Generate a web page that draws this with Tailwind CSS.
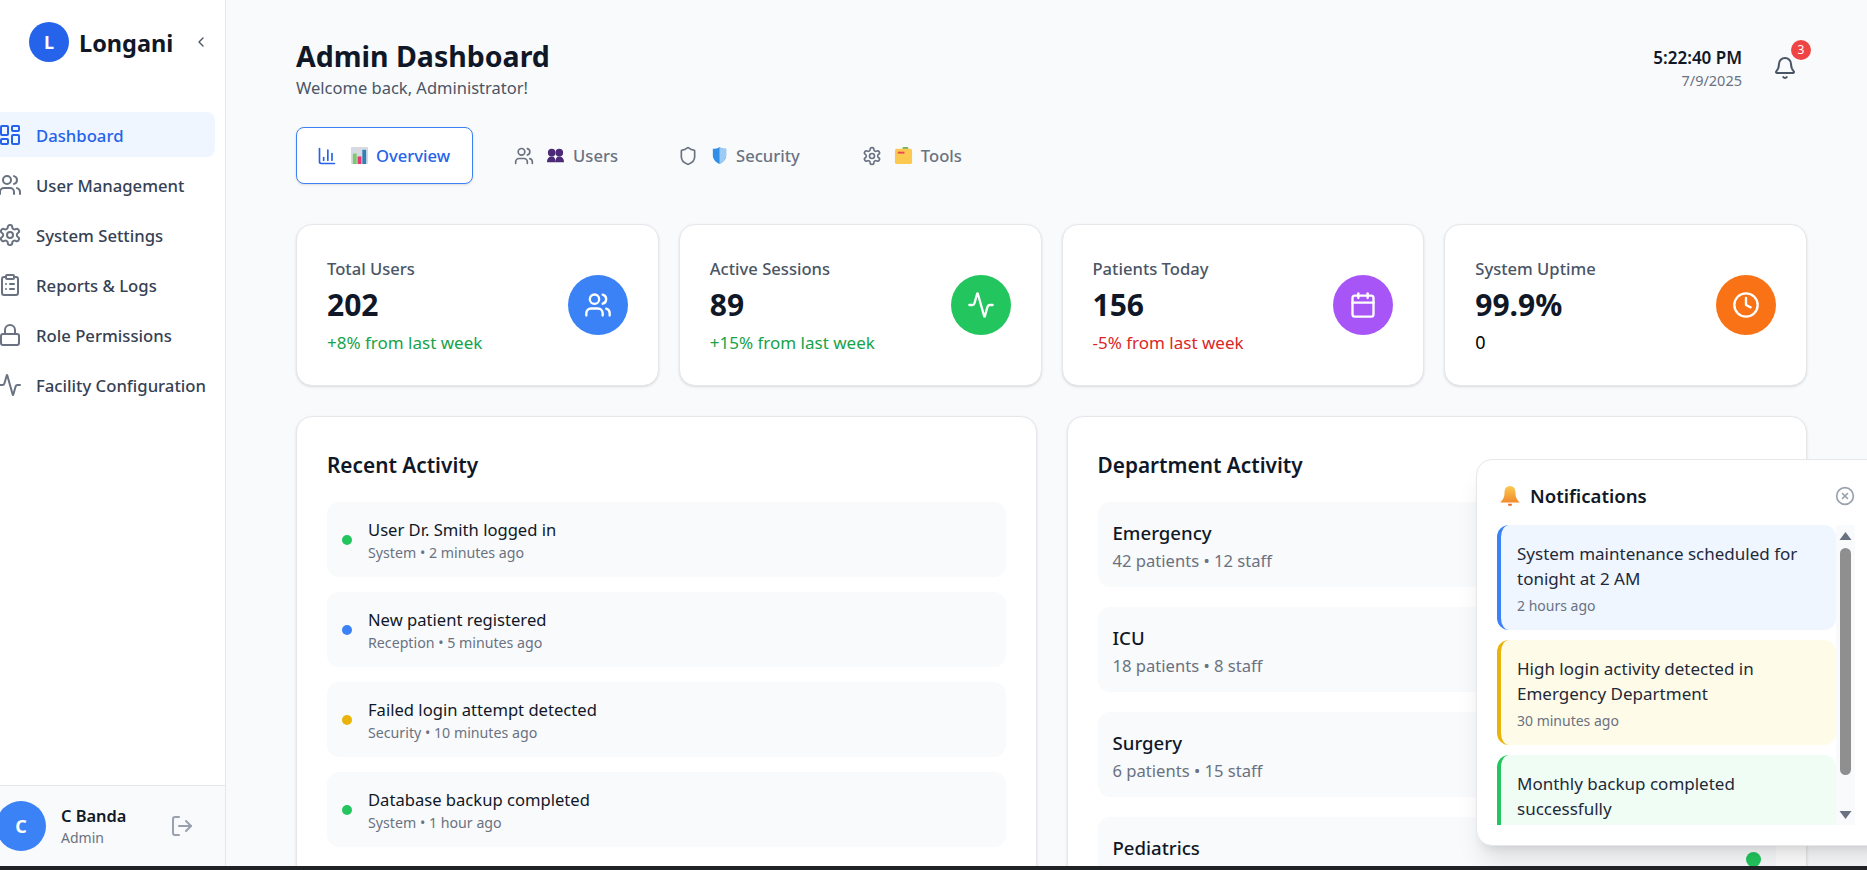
<!DOCTYPE html>
<html lang="en">
<head>
  <meta charset="UTF-8" />
  <meta name="viewport" content="width=device-width, initial-scale=1.0"/>
  <title>Longani - Admin Dashboard</title>
  <script src="https://cdn.jsdelivr.net/npm/@tailwindcss/browser@4"></script>
</head>
<body class="h-[870px] overflow-hidden bg-[#1f2326] font-['Noto_Sans',sans-serif] text-gray-900">
  <!-- icon sprite -->
  <svg class="hidden" xmlns="http://www.w3.org/2000/svg">
    <symbol id="i-dashboard" viewBox="0 0 24 24"><rect x="3" y="3" width="7" height="9" rx="1"/><rect x="14" y="3" width="7" height="5" rx="1"/><rect x="14" y="12" width="7" height="9" rx="1"/><rect x="3" y="16" width="7" height="5" rx="1"/></symbol>
    <symbol id="i-users" viewBox="0 0 24 24"><path d="M16 21v-2a4 4 0 0 0-4-4H6a4 4 0 0 0-4 4v2"/><circle cx="9" cy="7" r="4"/><path d="M22 21v-2a4 4 0 0 0-3-3.87"/><path d="M16 3.13a4 4 0 0 1 0 7.75"/></symbol>
    <symbol id="i-settings" viewBox="0 0 24 24"><path d="M12.22 2h-.44a2 2 0 0 0-2 2v.18a2 2 0 0 1-1 1.73l-.43.25a2 2 0 0 1-2 0l-.15-.08a2 2 0 0 0-2.73.73l-.22.38a2 2 0 0 0 .73 2.73l.15.1a2 2 0 0 1 1 1.72v.51a2 2 0 0 1-1 1.74l-.15.09a2 2 0 0 0-.73 2.73l.22.38a2 2 0 0 0 2.73.73l.15-.08a2 2 0 0 1 2 0l.43.25a2 2 0 0 1 1 1.73V20a2 2 0 0 0 2 2h.44a2 2 0 0 0 2-2v-.18a2 2 0 0 1 1-1.73l.43-.25a2 2 0 0 1 2 0l.15.08a2 2 0 0 0 2.73-.73l.22-.39a2 2 0 0 0-.73-2.73l-.15-.08a2 2 0 0 1-1-1.74v-.5a2 2 0 0 1 1-1.74l.15-.09a2 2 0 0 0 .73-2.73l-.22-.38a2 2 0 0 0-2.73-.73l-.15.08a2 2 0 0 1-2 0l-.43-.25a2 2 0 0 1-1-1.73V4a2 2 0 0 0-2-2z"/><circle cx="12" cy="12" r="3"/></symbol>
    <symbol id="i-clipboard" viewBox="0 0 24 24"><rect x="8" y="2" width="8" height="4" rx="1"/><path d="M16 4h2a2 2 0 0 1 2 2v14a2 2 0 0 1-2 2H6a2 2 0 0 1-2-2V6a2 2 0 0 1 2-2h2"/><path d="M12 11h4"/><path d="M12 16h4"/><path d="M8 11h.01"/><path d="M8 16h.01"/></symbol>
    <symbol id="i-lock" viewBox="0 0 24 24"><rect x="3" y="11" width="18" height="11" rx="2"/><path d="M7 11V7a5 5 0 0 1 10 0v4"/></symbol>
    <symbol id="i-activity" viewBox="0 0 24 24"><path d="M22 12h-2.48a2 2 0 0 0-1.93 1.46l-2.35 8.36a.25.25 0 0 1-.48 0L9.24 2.18a.25.25 0 0 0-.48 0l-2.35 8.36A2 2 0 0 1 4.49 12H2"/></symbol>
    <symbol id="i-chart" viewBox="0 0 24 24"><path d="M3 3v16a2 2 0 0 0 2 2h16"/><path d="M18 17V9"/><path d="M13 17V5"/><path d="M8 17v-3"/></symbol>
    <symbol id="i-shield" viewBox="0 0 24 24"><path d="M20 13c0 5-3.5 7.5-7.66 8.95a1 1 0 0 1-.67-.01C7.5 20.5 4 18 4 13V6a1 1 0 0 1 1-1c2 0 4.5-1.2 6.24-2.72a1.17 1.17 0 0 1 1.52 0C14.51 3.81 17 5 19 5a1 1 0 0 1 1 1z"/></symbol>
    <symbol id="i-calendar" viewBox="0 0 24 24"><path d="M8 2v4"/><path d="M16 2v4"/><rect x="3" y="4" width="18" height="18" rx="2"/><path d="M3 10h18"/></symbol>
    <symbol id="i-clock" viewBox="0 0 24 24"><circle cx="12" cy="12" r="10"/><path d="M12 6v6l4 2"/></symbol>
  </svg>

  <div class="flex h-[866px]">
    <!-- sidebar -->
    <aside class="flex h-full w-[226px] shrink-0 flex-col overflow-hidden border-r border-gray-200 bg-white">
      <div class="flex h-[84px] items-start pl-[29px] pt-[22px]">
        <div class="flex size-10 items-center justify-center rounded-full bg-[#2563eb] text-lg font-bold text-white">L</div>
        <span class="ml-[10px] mt-[4px] text-[23.5px] font-bold">Longani</span>
        <svg class="ml-[20px] mt-[12px] size-4 text-gray-600" viewBox="0 0 24 24" fill="none" stroke="currentColor" stroke-width="2" stroke-linecap="round" stroke-linejoin="round"><path d="m15 18-6-6 6-6"/></svg>
      </div>
      <nav class="ml-[-20px] mt-[28px] flex w-[235px] flex-1 flex-col gap-[5px] text-[16.7px] font-medium text-gray-700">
        <a class="flex h-[45px] items-center gap-[14px] rounded-lg bg-[#eff6ff] pl-[18px] text-[#2563eb]"><svg class="size-6 shrink-0" fill="none" stroke="currentColor" stroke-width="2" stroke-linecap="round" stroke-linejoin="round"><use href="#i-dashboard"/></svg><span class="mt-[2px]">Dashboard</span></a>
        <a class="flex h-[45px] items-center gap-[14px] rounded-lg pl-[18px]"><svg class="size-6 shrink-0 text-gray-500" fill="none" stroke="currentColor" stroke-width="2" stroke-linecap="round" stroke-linejoin="round"><use href="#i-users"/></svg><span class="mt-[2px]">User Management</span></a>
        <a class="flex h-[45px] items-center gap-[14px] rounded-lg pl-[18px]"><svg class="size-6 shrink-0 text-gray-500" fill="none" stroke="currentColor" stroke-width="2" stroke-linecap="round" stroke-linejoin="round"><use href="#i-settings"/></svg><span class="mt-[2px]">System Settings</span></a>
        <a class="flex h-[45px] items-center gap-[14px] rounded-lg pl-[18px]"><svg class="size-6 shrink-0 text-gray-500" fill="none" stroke="currentColor" stroke-width="2" stroke-linecap="round" stroke-linejoin="round"><use href="#i-clipboard"/></svg><span class="mt-[2px]">Reports &amp; Logs</span></a>
        <a class="flex h-[45px] items-center gap-[14px] rounded-lg pl-[18px]"><svg class="size-6 shrink-0 text-gray-500" fill="none" stroke="currentColor" stroke-width="2" stroke-linecap="round" stroke-linejoin="round"><use href="#i-lock"/></svg><span class="mt-[2px]">Role Permissions</span></a>
        <a class="flex h-[45px] items-center gap-[14px] rounded-lg pl-[18px]"><svg class="size-6 shrink-0 text-gray-500" fill="none" stroke="currentColor" stroke-width="2" stroke-linecap="round" stroke-linejoin="round"><use href="#i-activity"/></svg><span class="mt-[2px]">Facility Configuration</span></a>
      </nav>
      <div class="flex h-[81px] shrink-0 items-center border-t border-gray-200 bg-gray-50">
        <div class="ml-[-4px] flex size-[50px] shrink-0 items-center justify-center rounded-full bg-[#3b82f6] text-lg font-bold text-white">C</div>
        <div class="ml-[15px] w-[109px]">
          <p class="text-[16.4px] leading-6 font-semibold">C Banda</p>
          <p class="text-sm leading-5 text-gray-500">Admin</p>
        </div>
        <svg class="size-6 shrink-0 text-gray-400" viewBox="0 0 24 24" fill="none" stroke="currentColor" stroke-width="2" stroke-linecap="round" stroke-linejoin="round"><path d="M9 21H5a2 2 0 0 1-2-2V5a2 2 0 0 1 2-2h4"/><path d="m16 17 5-5-5-5"/><path d="M21 12H9"/></svg>
      </div>
    </aside>

    <!-- main -->
    <main class="relative flex-1 overflow-hidden bg-gray-50 pl-[70px] pr-[60px]">
      <header class="flex h-[127px] items-start justify-between pt-[38px]">
        <div>
          <h1 class="text-[28.5px] leading-[36px] font-bold">Admin Dashboard</h1>
          <p class="mt-[2px] text-[16.5px] leading-6 text-gray-600">Welcome back, Administrator!</p>
        </div>
        <div class="flex items-start">
          <div class="pt-[8px] text-right">
            <p class="text-[17px] leading-6 font-semibold">5:22:40 PM</p>
            <p class="text-[14.5px] leading-5 text-gray-500">7/9/2025</p>
          </div>
          <div class="relative ml-[31px] mr-[10px] mt-[18px] size-6 text-gray-600">
            <svg class="size-6" viewBox="0 0 24 24" fill="none" stroke="currentColor" stroke-width="2" stroke-linecap="round" stroke-linejoin="round"><path d="M10.268 21a2 2 0 0 0 3.464 0"/><path d="M3.262 15.326A1 1 0 0 0 4 17h16a1 1 0 0 0 .74-1.673C19.41 13.956 18 12.499 18 8A6 6 0 0 0 6 8c0 4.499-1.411 5.956-2.738 7.326"/></svg>
            <span class="absolute right-[-14px] top-[-16px] flex size-5 items-center justify-center rounded-full bg-[#ef4444] text-xs text-white">3</span>
          </div>
        </div>
      </header>

      <!-- tabs -->
      <div class="flex gap-5 text-[16.6px] font-medium text-gray-500">
        <button class="flex h-[57px] items-center rounded-lg border border-[#3b82f6] bg-white pl-[20px] pr-[22px] text-[#2563eb] shadow-sm">
          <svg class="mr-[13px] size-5" fill="none" stroke="currentColor" stroke-width="2" stroke-linecap="round" stroke-linejoin="round"><use href="#i-chart"/></svg>
          <svg class="mr-[7px] size-[19px]" viewBox="0 0 20 20"><rect x="1" y="1" width="18" height="18" rx="1" fill="#d6dbe3"/><rect x="3" y="8" width="4" height="11" fill="#7cc96b"/><rect x="8" y="11" width="4" height="8" fill="#e9386f"/><rect x="13" y="4" width="4" height="15" fill="#2f7fb8"/></svg>
          <span class="mt-[2px]">Overview</span>
        </button>
        <button class="flex h-[57px] items-center rounded-lg border border-transparent pl-[20px] pr-[18px]">
          <svg class="mr-[12px] size-5" fill="none" stroke="currentColor" stroke-width="2" stroke-linecap="round" stroke-linejoin="round"><use href="#i-users"/></svg>
          <svg class="mr-[8px] size-[19px]" viewBox="0 0 20 20" fill="#4c2a78"><circle cx="6" cy="7" r="4"/><circle cx="14" cy="7" r="4"/><path d="M1 17c0-4 2-6 5-6s4 2 4 6zM10 17c0-4 1-6 4-6s5 2 5 6z"/></svg>
          <span class="mt-[2px]">Users</span>
        </button>
        <button class="flex h-[57px] items-center rounded-lg border border-transparent px-[20px]">
          <svg class="mr-[12px] size-5" fill="none" stroke="currentColor" stroke-width="2" stroke-linecap="round" stroke-linejoin="round"><use href="#i-shield"/></svg>
          <svg class="mr-[7px] size-[19px]" viewBox="0 0 20 20"><path d="M10 1c2 1.500 4 2 7 2v7c0 4-3 7-7 9-4-2-7-5-7-9V3c3 0 5-.5 7-2z" fill="#2f8fe6"/><path d="M10 1c2 1.500 4 2 7 2v7c0 4-3 7-7 9z" fill="#9ccbf5"/></svg>
          <span class="mt-[2px]">Security</span>
        </button>
        <button class="flex h-[57px] items-center rounded-lg border border-transparent px-[20px]">
          <svg class="mr-[12px] size-5" fill="none" stroke="currentColor" stroke-width="2" stroke-linecap="round" stroke-linejoin="round"><use href="#i-settings"/></svg>
          <svg class="mr-[8px] size-[19px]" viewBox="0 0 20 20"><rect x="9" y="1" width="6" height="4" rx="1" fill="#6fb35a"/><rect x="1" y="3" width="18" height="16" rx="2" fill="#fbc94f"/><rect x="4" y="6" width="7" height="2" fill="#e8484f"/></svg>
          <span class="mt-[2px]">Tools</span>
        </button>
      </div>

      <!-- stat cards -->
      <section class="mt-[40px] grid grid-cols-4 gap-5">
        <div class="flex h-[162px] items-center justify-between rounded-2xl border border-gray-200 bg-white px-[30px] shadow-sm">
          <div class="pt-[2px]">
            <p class="mb-[1px] text-[16.6px] leading-6 font-medium text-gray-600">Total Users</p>
            <p class="mt-[6px] text-3xl leading-[36px] font-bold">202</p>
            <p class="mt-[8px] text-[17px] leading-6 text-[#16a34a]">+8% from last week</p>
          </div>
          <div class="flex size-[60px] items-center justify-center rounded-full bg-[#3b82f6] text-white"><svg class="size-7" fill="none" stroke="currentColor" stroke-width="2" stroke-linecap="round" stroke-linejoin="round"><use href="#i-users"/></svg></div>
        </div>
        <div class="flex h-[162px] items-center justify-between rounded-2xl border border-gray-200 bg-white px-[30px] shadow-sm">
          <div class="pt-[2px]">
            <p class="mb-[1px] text-[16.6px] leading-6 font-medium text-gray-600">Active Sessions</p>
            <p class="mt-[6px] text-3xl leading-[36px] font-bold">89</p>
            <p class="mt-[8px] text-[17px] leading-6 text-[#16a34a]">+15% from last week</p>
          </div>
          <div class="flex size-[60px] items-center justify-center rounded-full bg-[#22c55e] text-white"><svg class="size-7" fill="none" stroke="currentColor" stroke-width="2" stroke-linecap="round" stroke-linejoin="round"><use href="#i-activity"/></svg></div>
        </div>
        <div class="flex h-[162px] items-center justify-between rounded-2xl border border-gray-200 bg-white px-[30px] shadow-sm">
          <div class="pt-[2px]">
            <p class="mb-[1px] text-[16.6px] leading-6 font-medium text-gray-600">Patients Today</p>
            <p class="mt-[6px] text-3xl leading-[36px] font-bold">156</p>
            <p class="mt-[8px] text-[17px] leading-6 text-[#dc2626]">-5% from last week</p>
          </div>
          <div class="flex size-[60px] items-center justify-center rounded-full bg-[#a855f7] text-white"><svg class="size-7" fill="none" stroke="currentColor" stroke-width="2" stroke-linecap="round" stroke-linejoin="round"><use href="#i-calendar"/></svg></div>
        </div>
        <div class="flex h-[162px] items-center justify-between rounded-2xl border border-gray-200 bg-white px-[30px] shadow-sm">
          <div class="pt-[2px]">
            <p class="mb-[1px] text-[16.6px] leading-6 font-medium text-gray-600">System Uptime</p>
            <p class="mt-[6px] text-3xl leading-[36px] font-bold">99.9%</p>
            <p class="mb-[2px] mt-[8px] text-lg leading-[22px] text-black">0</p>
          </div>
          <div class="flex size-[60px] items-center justify-center rounded-full bg-[#f97316] text-white"><svg class="size-7" fill="none" stroke="currentColor" stroke-width="2" stroke-linecap="round" stroke-linejoin="round"><use href="#i-clock"/></svg></div>
        </div>
      </section>

      <!-- panels -->
      <section class="mt-[30px] grid grid-cols-2 gap-[30px]">
        <div class="h-[600px] rounded-2xl border border-gray-200 bg-white px-[30px] pt-[33px] shadow-sm">
          <h2 class="text-[20.8px] leading-[30px] font-semibold">Recent Activity</h2>
          <ul class="mt-[22px] flex flex-col gap-[15px]">
            <li class="flex h-[75px] items-center gap-[16px] rounded-xl bg-gray-50 px-[15px]"><span class="size-[10px] rounded-full bg-[#22c55e]"></span><div class="pt-[2px]"><p class="text-[16.6px] leading-6">User Dr. Smith logged in</p><p class="mt-[1px] text-[14.2px] leading-5 text-gray-500">System • 2 minutes ago</p></div></li>
            <li class="flex h-[75px] items-center gap-[16px] rounded-xl bg-gray-50 px-[15px]"><span class="size-[10px] rounded-full bg-[#3b82f6]"></span><div class="pt-[2px]"><p class="text-[16.6px] leading-6">New patient registered</p><p class="mt-[1px] text-[14.2px] leading-5 text-gray-500">Reception • 5 minutes ago</p></div></li>
            <li class="flex h-[75px] items-center gap-[16px] rounded-xl bg-gray-50 px-[15px]"><span class="size-[10px] rounded-full bg-[#eab308]"></span><div class="pt-[2px]"><p class="text-[16.6px] leading-6">Failed login attempt detected</p><p class="mt-[1px] text-[14.2px] leading-5 text-gray-500">Security • 10 minutes ago</p></div></li>
            <li class="flex h-[75px] items-center gap-[16px] rounded-xl bg-gray-50 px-[15px]"><span class="size-[10px] rounded-full bg-[#22c55e]"></span><div class="pt-[2px]"><p class="text-[16.6px] leading-6">Database backup completed</p><p class="mt-[1px] text-[14.2px] leading-5 text-gray-500">System • 1 hour ago</p></div></li>
          </ul>
        </div>
        <div class="h-[600px] rounded-2xl border border-gray-200 bg-white px-[30px] pt-[33px] shadow-sm">
          <h2 class="text-[20.8px] leading-[30px] font-semibold">Department Activity</h2>
          <ul class="mt-[22px] flex flex-col gap-5">
            <li class="flex h-[85px] items-center justify-between rounded-xl bg-gray-50 px-[15px]"><div class="pt-[3px]"><p class="text-[18.6px] leading-7 font-medium">Emergency</p><p class="mt-[2px] text-[16.6px] leading-6 text-gray-500">42 patients • 12 staff</p></div><span class="size-[15px] rounded-full bg-[#22c55e]"></span></li>
            <li class="flex h-[85px] items-center justify-between rounded-xl bg-gray-50 px-[15px]"><div class="pt-[3px]"><p class="text-[18.6px] leading-7 font-medium">ICU</p><p class="mt-[2px] text-[16.6px] leading-6 text-gray-500">18 patients • 8 staff</p></div><span class="size-[15px] rounded-full bg-[#22c55e]"></span></li>
            <li class="flex h-[85px] items-center justify-between rounded-xl bg-gray-50 px-[15px]"><div class="pt-[3px]"><p class="text-[18.6px] leading-7 font-medium">Surgery</p><p class="mt-[2px] text-[16.6px] leading-6 text-gray-500">6 patients • 15 staff</p></div><span class="size-[15px] rounded-full bg-[#22c55e]"></span></li>
            <li class="flex h-[85px] items-center justify-between rounded-xl bg-gray-50 px-[15px]"><div class="pt-[3px]"><p class="text-[18.6px] leading-7 font-medium">Pediatrics</p><p class="mt-[2px] text-[16.6px] leading-6 text-gray-500">24 patients • 9 staff</p></div><span class="size-[15px] rounded-full bg-[#22c55e]"></span></li>
          </ul>
        </div>
      </section>

      <!-- notifications popup -->
      <div class="absolute left-[1250px] top-[459px] h-[387px] w-[420px] rounded-2xl border border-gray-200 bg-white pl-[20px] pt-[20px] shadow-xl">
        <div class="flex h-[32px] w-[358px] items-center">
          <svg class="ml-[2px] size-[22px]" viewBox="0 0 20 20"><defs><linearGradient id="bellfill" x1="0" y1="0" x2="0" y2="1"><stop offset="0" stop-color="#fcc84e"/><stop offset="1" stop-color="#f28a2e"/></linearGradient></defs><path d="M10 1c3 0 5 2.500 5 6 0 4 1 6 4 9H1c3-3 4-5 4-9 0-3.500 2-6 5-6z" fill="url(#bellfill)"/><path d="M8 17h4a2 2 0 0 1-4 0z" fill="#e8742a"/></svg>
          <h3 class="ml-[9px] flex-1 text-[18.6px] font-semibold">Notifications</h3>
          <svg class="size-[20px] text-gray-400" viewBox="0 0 24 24" fill="none" stroke="currentColor" stroke-width="2" stroke-linecap="round" stroke-linejoin="round"><circle cx="12" cy="12" r="10"/><path d="m15 9-6 6"/><path d="m9 9 6 6"/></svg>
        </div>
        <div class="mt-[13px] flex h-[300px] w-[358px]">
          <div class="flex w-[339px] shrink-0 flex-col gap-[10px] overflow-hidden">
            <div class="h-[105px] shrink-0 rounded-xl border-l-[4px] border-[#3b82f6] bg-[#eff6ff] pl-[16px] pr-[16px] pt-[16px]"><p class="text-[17px] leading-[25px] text-gray-800">System maintenance scheduled for tonight at 2 AM</p><p class="mt-[5px] text-sm leading-5 text-gray-500">2 hours ago</p></div>
            <div class="h-[105px] shrink-0 rounded-xl border-l-[4px] border-[#eab308] bg-[#fefce8] pl-[16px] pr-[16px] pt-[16px]"><p class="text-[17px] leading-[25px] text-gray-800">High login activity detected in Emergency Department</p><p class="mt-[5px] text-sm leading-5 text-gray-500">30 minutes ago</p></div>
            <div class="h-[105px] shrink-0 rounded-xl border-l-[4px] border-[#22c55e] bg-[#f0fdf4] pl-[16px] pr-[16px] pt-[16px]"><p class="text-[17px] leading-[25px] text-gray-800">Monthly backup completed successfully</p></div>
          </div>
          <!-- scrollbar -->
          <div class="flex w-[19px] flex-col items-center bg-gray-50">
            <svg class="mt-[6px] h-[10px] w-[13px] text-gray-500" viewBox="0 0 13 10" fill="currentColor"><path d="M6.500 1 12.500 9H.5z"/></svg>
            <div class="mt-[7px] h-[227px] w-[11px] rounded-full bg-[#8f8f8f]"></div>
            <svg class="mt-[35px] h-[10px] w-[13px] text-gray-500" viewBox="0 0 13 10" fill="currentColor"><path d="M6.500 9 12.500 1H.5z"/></svg>
          </div>
        </div>
      </div>
    </main>
  </div>
  <div class="h-[4px] bg-[#1f2326]"></div>
</body>
</html>
